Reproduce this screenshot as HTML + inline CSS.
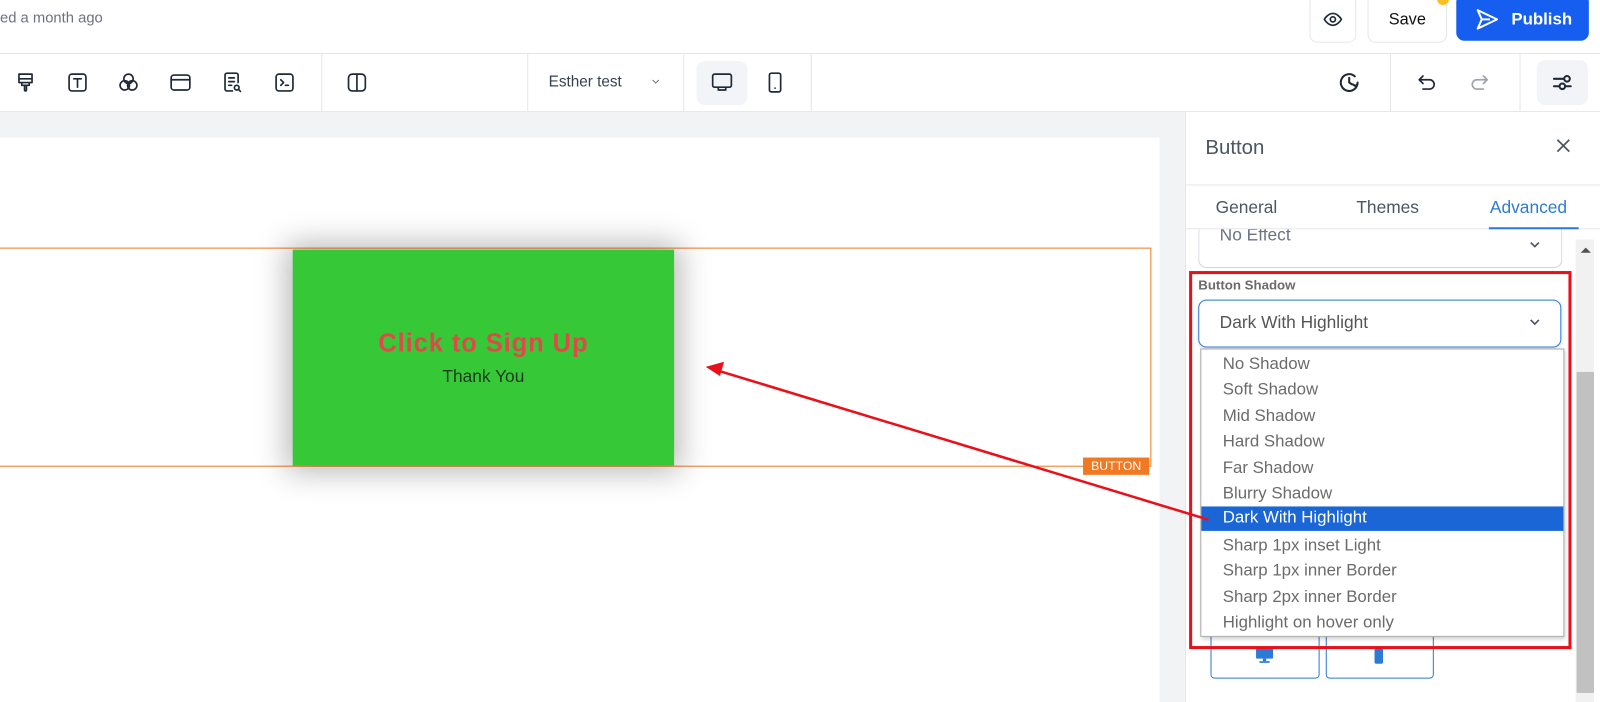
<!DOCTYPE html>
<html><head><meta charset="utf-8"><style>
html,body{margin:0;padding:0;width:1600px;height:702px;overflow:hidden;background:#fff;font-family:"Liberation Sans",sans-serif}
#w{position:absolute;left:0;top:0;width:1569px;height:689px;transform:scale(1.0198,1.019);transform-origin:0 0}
.a{position:absolute}
.ic{position:absolute;width:22px;height:22px}
.ic svg{width:22px;height:22px;fill:none;stroke:#1f2937;stroke-width:1.8;stroke-linecap:round;stroke-linejoin:round}
.sep{position:absolute;top:52px;width:1px;height:58px;background:#e5e7eb}
.item{position:absolute;left:21px;font-size:16.5px;color:#6b6b6b;height:25.4px;line-height:25.4px}
</style></head><body><div id="w">
<div class="a" style="left:0;top:0;width:1569px;height:52px;border-bottom:1px solid #e5e7eb;background:#fff"></div>
<div class="a" style="left:0;top:10px;font-size:14.5px;color:#6b7280">ed a month ago</div>
<div class="a" style="left:1284px;top:-6px;width:44px;height:46px;border:1px solid #e5e7eb;border-radius:8px"></div>
<svg class="a" style="left:1297px;top:9px" width="20" height="20" viewBox="0 0 24 24" fill="none" stroke="#1f2937" stroke-width="2"><path d="M2 12s4-7 10-7 10 7 10 7-4 7-10 7S2 12 2 12z"/><circle cx="12" cy="12" r="3"/></svg>
<div class="a" style="left:1341px;top:-6px;width:76px;height:46px;border:1px solid #e5e7eb;border-radius:8px;font-size:16px;color:#111;text-align:center;line-height:50px">Save</div>
<div class="a" style="left:1409px;top:-7px;width:12px;height:12px;border-radius:50%;background:#fbbf24"></div>
<div class="a" style="left:1428px;top:-6px;width:130px;height:46px;background:#155eef;border-radius:8px;color:#fff;font-weight:bold;font-size:16.5px;line-height:50px;text-indent:54px">Publish</div>
<svg class="a" style="left:1445px;top:7px" width="26" height="24" viewBox="0 0 24 24" fill="none" stroke="#fff" stroke-width="2" stroke-linejoin="round"><path d="M3 3l19 9-19 9 4-9z M7 12h8"/></svg>
<div class="a" style="left:0;top:109px;width:1569px;height:1px;background:#e5e7eb"></div>
<div class="ic" style="left:14px;top:70px"><svg viewBox="0 0 24 24"><path d="M5 3h14v9H5zM5 8h14M8 12v3h8v-3M11 15v5a1 1 0 0 0 2 0v-5"/></svg></div>
<div class="ic" style="left:65px;top:70px"><svg viewBox="0 0 24 24"><rect x="3" y="3" width="18" height="18" rx="3"/><path d="M8 8h8M12 8v9"/></svg></div>
<div class="ic" style="left:115px;top:70px"><svg viewBox="0 0 24 24"><circle cx="12" cy="8" r="5"/><circle cx="8" cy="15" r="5"/><circle cx="16" cy="15" r="5"/></svg></div>
<div class="ic" style="left:166px;top:70px"><svg viewBox="0 0 24 24"><rect x="2" y="4" width="20" height="16" rx="3"/><path d="M2 9h20"/></svg></div>
<div class="ic" style="left:217px;top:70px"><svg viewBox="0 0 24 24"><path d="M12 21H6a2 2 0 0 1-2-2V4a2 2 0 0 1 2-2h10a2 2 0 0 1 2 2v8M8 7h6M8 11h6M8 15h3"/><circle cx="16.5" cy="17.5" r="2.5"/><path d="M18.5 19.5l2 2"/></svg></div>
<div class="ic" style="left:268px;top:70px"><svg viewBox="0 0 24 24"><rect x="3" y="3" width="18" height="18" rx="3"/><path d="M8 9l3 3-3 3M13 15h3"/></svg></div>
<div class="sep" style="left:315px"></div>
<div class="ic" style="left:339px;top:70px"><svg viewBox="0 0 24 24"><rect x="3" y="3" width="18" height="18" rx="4"/><path d="M12 3v18"/></svg></div>
<div class="sep" style="left:517px"></div>
<div class="a" style="left:538px;top:72px;font-size:15px;color:#374151">Esther test</div>
<svg class="a" style="left:637px;top:74px" width="12" height="12" viewBox="0 0 24 24" fill="none" stroke="#6b7280" stroke-width="2"><path d="M6 9l6 6 6-6"/></svg>
<div class="sep" style="left:670px"></div>
<div class="a" style="left:683px;top:60px;width:50px;height:43px;background:#f2f4f7;border-radius:8px"></div>
<div class="ic" style="left:697px;top:70px"><svg viewBox="0 0 24 24"><rect x="2" y="3" width="20" height="14" rx="2"/><path d="M8 17v3h8v-3"/></svg></div>
<div class="ic" style="left:749px;top:70px"><svg viewBox="0 0 24 24"><rect x="6" y="2" width="12" height="20" rx="2"/><path d="M12 18h.01"/></svg></div>
<div class="sep" style="left:795px"></div>
<div class="ic" style="left:1312px;top:70px"><svg viewBox="0 0 24 24" style="stroke-width:2.2"><path d="M21 12a9 9 0 1 1-3-6.7M12 7v5l3 2M21 13l-2 3-3-2"/></svg></div>
<div class="sep" style="left:1363px"></div>
<div class="ic" style="left:1388px;top:70px"><svg viewBox="0 0 24 24"><path d="M8 5L4 9l4 4M4 9h11a5 5 0 0 1 0 10H8"/></svg></div>
<div class="ic" style="left:1440px;top:70px"><svg viewBox="0 0 24 24" style="stroke:#9ca3af"><path d="M16 5l4 4-4 4M20 9H9a5 5 0 0 0 0 10h7"/></svg></div>
<div class="sep" style="left:1490px"></div>
<div class="a" style="left:1507px;top:59px;width:50px;height:44px;background:#f2f4f7;border-radius:8px"></div>
<div class="ic" style="left:1521px;top:70px"><svg viewBox="0 0 24 24" style="stroke-width:2.2"><path d="M3 8h11M3 16h6M15 16h6"/><circle cx="17" cy="8" r="3"/><circle cx="12" cy="16" r="3"/></svg></div>
<div class="a" style="left:0;top:110px;width:1162px;height:579px;background:#f2f3f5"></div>
<div class="a" style="left:0;top:135px;width:1137px;height:554px;background:#fff"></div>
<div class="a" style="left:-2px;top:243px;width:1129px;height:213px;border:1px solid #f07a24"></div>
<div class="a" style="left:1062px;top:449px;width:65px;height:17px;background:#f07a24;color:#fff;font-size:12px;line-height:17px;text-align:center">BUTTON</div>
<div class="a" style="left:287px;top:245px;width:374px;height:212px;background:#37c837;box-shadow:0 0 28px 6px rgba(0,0,0,.28);text-align:center">
<div style="margin-top:78px;color:#e0484a;font-weight:bold;font-size:25px;letter-spacing:0.9px">Click to Sign Up</div>
<div style="margin-top:8px;color:#1e3a1e;font-size:17px">Thank You</div>
</div>
<div class="a" style="left:1162px;top:110px;width:407px;height:579px;background:#fff;border-left:1px solid #e5e7eb"></div>
<div class="a" style="left:1182px;top:134px;font-size:20px;color:#4b5563">Button</div>
<svg class="a" style="left:1523px;top:133px" width="20" height="20" viewBox="0 0 24 24" fill="none" stroke="#4b5563" stroke-width="2"><path d="M5 5l14 14M19 5L5 19"/></svg>
<div class="a" style="left:1162px;top:181px;width:407px;height:1px;background:#e5e7eb"></div>
<div class="a" style="left:1192px;top:194px;font-size:17px;color:#4b5563">General</div>
<div class="a" style="left:1330px;top:194px;font-size:17px;color:#4b5563">Themes</div>
<div class="a" style="left:1461px;top:194px;font-size:17px;color:#2b7bd4">Advanced</div>
<div class="a" style="left:1162px;top:224px;width:407px;height:1px;background:#e5e7eb"></div>
<div class="a" style="left:1460px;top:223px;width:88px;height:2px;background:#2b7bd4"></div>
<div class="a" style="left:1175px;top:225px;width:355px;height:37px;border:1px solid #d1d5db;border-top:none;border-radius:0 0 8px 8px;overflow:hidden"><div style="position:absolute;left:20px;top:-4px;font-size:17px;color:#6b7280">No Effect</div></div>
<svg class="a" style="left:1497px;top:232px" width="16" height="16" viewBox="0 0 24 24" fill="none" stroke="#4b5563" stroke-width="2.4"><path d="M6 9l6 6 6-6"/></svg>
<div class="a" style="left:1545px;top:235px;width:18px;height:454px;background:#f1f1f1"></div>
<div class="a" style="left:1550px;top:243px;width:0;height:0;border-left:5px solid transparent;border-right:5px solid transparent;border-bottom:5px solid #505050"></div>
<div class="a" style="left:1546px;top:365px;width:17px;height:315px;background:#c1c1c1"></div>
<div class="a" style="left:1187px;top:615px;width:105px;height:49px;border:1px solid #2b7bd4;border-radius:4px"></div>
<div class="a" style="left:1300px;top:615px;width:104px;height:49px;border:1px solid #2b7bd4;border-radius:4px"></div>
<svg class="a" style="left:1230px;top:633px" width="20" height="20" viewBox="0 0 24 24" fill="#2b7bd4"><rect x="2" y="3" width="20" height="13" rx="1"/><rect x="10" y="16" width="4" height="3"/><rect x="6" y="19" width="12" height="2"/></svg>
<svg class="a" style="left:1345px;top:633px" width="14" height="20" viewBox="0 0 14 24" fill="#2b7bd4"><rect x="2" y="2" width="10" height="20" rx="2"/></svg>
<div class="a" style="left:1175px;top:294px;width:354px;height:45px;border:1.5px solid #2b7bd4;border-radius:8px;background:#fff;box-shadow:0 1px 3px rgba(0,0,0,.15)"></div>
<div class="a" style="left:1196px;top:307px;font-size:17px;color:#555">Dark With Highlight</div>
<svg class="a" style="left:1497px;top:308px" width="16" height="16" viewBox="0 0 24 24" fill="none" stroke="#4b5563" stroke-width="2.4"><path d="M6 9l6 6 6-6"/></svg>
<div class="a" style="left:1175px;top:272px;font-size:13px;font-weight:bold;color:#6b6b6b">Button Shadow</div>
<div class="a" style="left:1177px;top:342px;width:355px;height:281px;background:#fff;border:1px solid #aaa;box-shadow:1px 2px 4px rgba(0,0,0,.2)">
<div class="item" style="top:2px">No Shadow</div>
<div class="item" style="top:27.4px">Soft Shadow</div>
<div class="item" style="top:52.8px">Mid Shadow</div>
<div class="item" style="top:78.2px">Hard Shadow</div>
<div class="item" style="top:103.6px">Far Shadow</div>
<div class="item" style="top:129px">Blurry Shadow</div>
<div class="a" style="left:0;top:154px;width:355px;height:24px;background:#1a66d6"></div>
<div class="item" style="top:153.4px;color:#fff">Dark With Highlight</div>
<div class="item" style="top:179.8px">Sharp 1px inset Light</div>
<div class="item" style="top:205.2px">Sharp 1px inner Border</div>
<div class="item" style="top:230.6px">Sharp 2px inner Border</div>
<div class="item" style="top:256px">Highlight on hover only</div>
</div>
<div class="a" style="left:1166px;top:266px;width:369px;height:365px;border:3px solid #e8111b"></div>
<svg class="a" style="left:0;top:0" width="1569" height="689"><line x1="1185" y1="510" x2="705" y2="364" stroke="#e8111b" stroke-width="2.5"/><path d="M692 360l18-5-4 14z" fill="#e8111b"/></svg>
</div></body></html>
